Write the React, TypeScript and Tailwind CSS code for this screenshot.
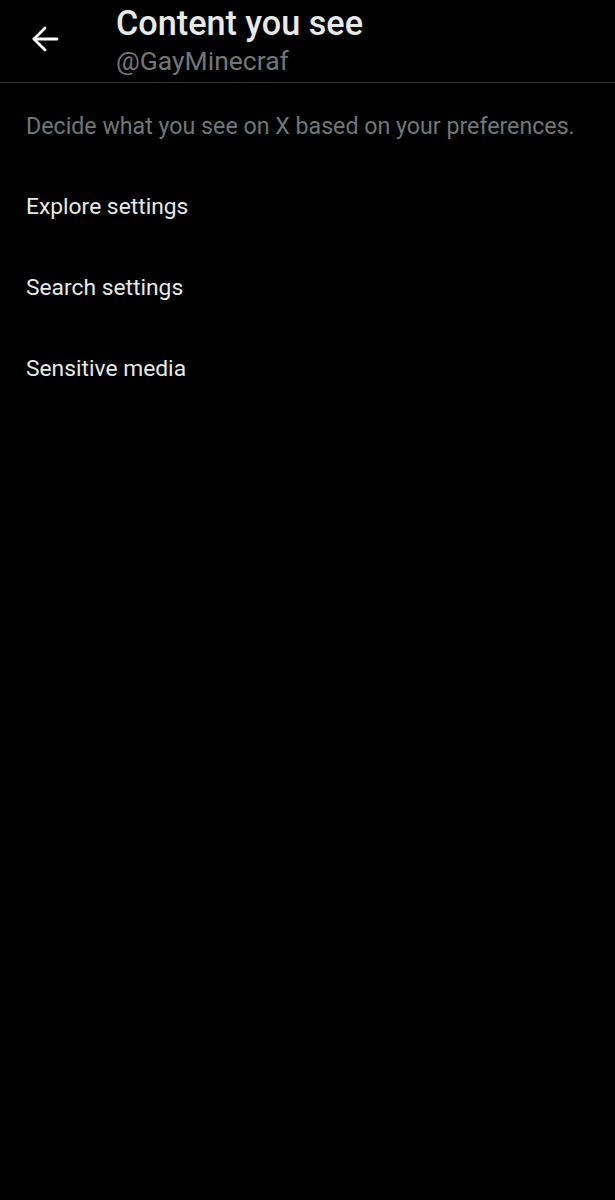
const items = ['Explore settings', 'Search settings', 'Sensitive media']

function BackArrow() {
  return (
    <svg viewBox="0 0 28 28" className="h-[28px] w-[28px]" fill="none" stroke="white" strokeWidth={2.8} strokeLinecap="round" strokeLinejoin="round">
      <path d="M26 14H3" />
      <path d="M14 3L3 14L14 25" />
    </svg>
  )
}

export default function App() {
  return (
    <div className="min-h-[1200px] w-full bg-black text-[#e7e9ea] font-['Roboto',sans-serif]">
      {/* Header */}
      <div className="flex h-[83px] items-center border-b border-[#2f3336]">
        <div className="flex w-[116px] shrink-0 pl-[31px] pb-[4px]">
          <BackArrow />
        </div>
        <div className="flex flex-col">
          <h1 className="text-[34.2px] font-medium leading-[36px] text-[#e7e9ea]">
            Content you see
          </h1>
          <span className="mt-[4px] text-[26.5px] leading-[32px] text-[#71767b]">@GayMinecraf</span>
        </div>
      </div>

      {/* Description */}
      <p className="px-[26px] pt-[29px] text-[23.2px] leading-[28px] text-[#71767b] whitespace-nowrap">
        Decide what you see on X based on your preferences.
      </p>

      {/* Items */}
      <div className="mt-[27px] flex flex-col">
        {items.map((item) => (
          <div key={item} className="flex h-[81px] items-center px-[26px] text-[22.8px] text-[#e7e9ea]">
            {item}
          </div>
        ))}
      </div>
    </div>
  )
}
